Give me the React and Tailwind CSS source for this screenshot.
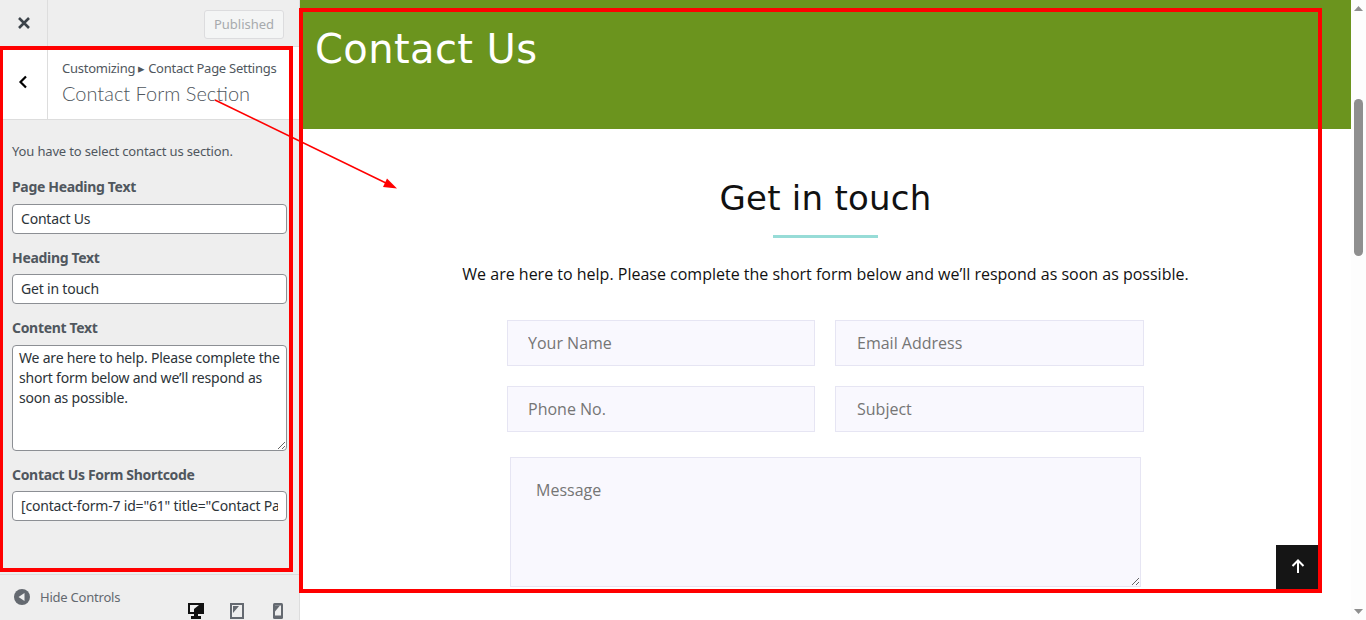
import React from "react";

const ubuntu = "font-['Noto_Sans','Open_Sans',sans-serif]";

function SideField({ label, value, mt, gap }) {
  return (
    <div className={mt}>
      <div className="text-[14px] leading-[20px] font-bold text-[#50575e] tracking-[-0.32px]">{label}</div>
      <input
        readOnly
        value={value}
        className={`${gap} block w-[275px] h-[30px] px-[8px] pb-[2px] bg-white border border-[#8c8f94] rounded-[4px] text-[14px] text-[#2c3338] outline-none tracking-[-0.2px]`}
      />
    </div>
  );
}

function FormInput({ placeholder, pad }) {
  return (
    <input
      placeholder={placeholder}
      className={`${pad} block w-full h-[46px] pr-[20px] bg-[#f9f8fe] border border-[#e6e5f3] text-[16px] text-[#333] placeholder:text-[#757575] outline-none`}
    />
  );
}

export default function App() {
  return (
    <div className="relative flex w-[1366px] h-[620px] overflow-hidden bg-white">
      {/* customizer sidebar */}
      <aside className={`flex flex-col w-[300px] h-full shrink-0 bg-[#eeeeee] border-r border-[#dddddd] ${ubuntu}`}>
        <div className="flex items-start justify-between h-[47px] shrink-0 border-b border-[#dddddd] pr-[15px]">
          <div className="flex items-center justify-center w-[48px] h-full border-r border-[#dddddd]">
            <svg width="14" height="14" viewBox="0 0 14 14" fill="none" stroke="#3c434a" strokeWidth="2.6">
              <path d="M2 2l10 10M12 2L2 12" />
            </svg>
          </div>
          <div className="mt-[10px] flex items-center justify-center w-[80px] h-[29px] bg-[#f4f5f5] border border-[#dcdcde] rounded-[3px] text-[13px] text-[#a7aaad]">
            Published
          </div>
        </div>

        <div className="flex h-[73px] shrink-0 bg-white border-b border-[#dddddd]">
          <div className="flex items-center justify-center w-[48px] h-full pr-[1px] pb-[2px] border-r border-[#dddddd]">
            <svg width="10" height="14" viewBox="0 0 10 14" fill="none" stroke="#000" strokeWidth="2.2">
              <path d="M8 1.500L2.500 7 8 12.500" />
            </svg>
          </div>
          <div className="pl-[14px] pt-[12px]">
            <div className="text-[13px] leading-[18px] text-[#50575e] whitespace-nowrap tracking-[-0.26px]">
              Customizing ▸ Contact Page Settings
            </div>
            <div className="mt-[2px] font-['Lato',sans-serif] text-[20px] leading-[28px] font-light text-[#50575e] whitespace-nowrap">
              Contact Form Section
            </div>
          </div>
        </div>

        <div className="flex-1 pl-[12px] pt-[21px]">
          <div className="text-[13px] leading-[20px] text-[#50575e] tracking-[-0.15px]">You have to select contact us section.</div>
          <SideField label="Page Heading Text" value="Contact Us" mt="mt-[16px]" gap="mt-[7px]" />
          <SideField label="Heading Text" value="Get in touch" mt="mt-[14px]" gap="mt-[6px]" />
          <div className="mt-[14px]">
            <div className="text-[14px] leading-[20px] font-bold text-[#50575e] tracking-[-0.32px]">Content Text</div>
            <textarea
              readOnly
              value="We are here to help. Please complete the short form below and we’ll respond as soon as possible."
              className="mt-[7px] block w-[275px] h-[106px] px-[6px] py-[2px] bg-white border border-[#8c8f94] rounded-[4px] text-[14px] leading-[20px] text-[#2c3338] outline-none tracking-[-0.2px]"
            />
          </div>
          <SideField label="Contact Us Form Shortcode" value={'[contact-form-7 id="61" title="Contact Page Form"]'} mt="mt-[14px]" gap="mt-[6px]" />
        </div>

        <div className="flex items-start justify-between h-[46px] shrink-0 border-t border-[#dddddd] pl-[14px] pr-[16px]">
          <div className="flex items-center gap-[10px] mt-[14px]">
            <svg width="16" height="16" viewBox="0 0 16 16">
              <circle cx="8" cy="8" r="8" fill="#646970" />
              <path d="M10.500 4v8L4.500 8z" fill="#eee" />
            </svg>
            <span className="text-[13px] leading-[16px] text-[#646970] tracking-[-0.22px]">Hide Controls</span>
          </div>
          <div className="flex items-center mt-[28px]">
            <svg width="16" height="16" viewBox="0 0 16 16">
              <path d="M0 0h16v11h-6v2h3v3H3v-3h3v-2H0z" fill="#111" />
              <path d="M2 2h9L6 6v3H2z" fill="#eee" />
            </svg>
            <svg className="ml-[26px]" width="14" height="16" viewBox="0 0 14 16">
              <rect x="1" y="1" width="12" height="14" fill="none" stroke="#646970" strokeWidth="2" />
              <path d="M3 3h6l-6 7z" fill="#646970" />
            </svg>
            <svg className="ml-[29px]" width="10" height="16" viewBox="0 0 10 16">
              <rect x="0" y="0" width="10" height="16" rx="1.500" fill="#646970" />
              <path d="M2 2.500h6v10H2z" fill="#eee" />
              <path d="M2 2.500h5l-5 6z" fill="#646970" />
            </svg>
          </div>
        </div>
      </aside>

      {/* preview */}
      <main className="relative flex-1 min-w-0 font-['Open_Sans',sans-serif]">
        <div className="h-[129px] bg-[#6b941e] pl-[15px] pt-[22px]">
          <h1 className="font-['DejaVu_Sans',sans-serif] text-[40px] leading-[54px] text-white tracking-[0.4px]">Contact Us</h1>
        </div>
        <section className="flex flex-col items-center pt-[46px]">
          <h2 className="font-['DejaVu_Sans',sans-serif] text-[34px] leading-[46px] font-normal text-[#111] tracking-[0.25px]">Get in touch</h2>
          <div className="mt-[14px] w-[105px] h-[3px] bg-[#97dcd7]" />
          <p className="mt-[24px] text-[16px] leading-[24px] text-[#111]">
            We are here to help. Please complete the short form below and we’ll respond as soon as possible.
          </p>
          <div className="mt-[34px] grid grid-cols-[308px_309px] gap-x-[20px] gap-y-[20px]">
            <FormInput placeholder="Your Name" pad="pl-[20px]" />
            <FormInput placeholder="Email Address" pad="pl-[21px]" />
            <FormInput placeholder="Phone No." pad="pl-[20px]" />
            <FormInput placeholder="Subject" pad="pl-[21px]" />
          </div>
          <textarea
            placeholder="Message"
            className="mt-[25px] block w-[631px] h-[130px] px-[25px] pt-[20px] bg-[#f9f8fe] border border-[#e6e5f3] text-[16px] placeholder:text-[#757575] outline-none"
          />
        </section>

        <div className="absolute left-[976px] top-[545px] flex items-center justify-center w-[42px] h-[45px] pl-[2px] pb-[2px] bg-[#151515]">
          <svg width="14" height="15" viewBox="0 0 14 15" fill="none" stroke="#fff" strokeWidth="2">
            <path d="M7 14V2M1.500 7L7 1.500 12.500 7" />
          </svg>
        </div>
      </main>

      {/* scrollbar */}
      <div className="flex flex-col items-center justify-between w-[15px] shrink-0 bg-[#fdfdfd] pt-[6px] pb-[6px]">
        <div className="flex flex-col items-center">
          <svg width="9" height="5" viewBox="0 0 9 5"><path d="M4.500 0L9 5H0z" fill="#8f8f8f" /></svg>
          <div className="mt-[88px] w-[9px] h-[157px] rounded-full bg-[#8f8f8f]" />
        </div>
        <svg width="9" height="5" viewBox="0 0 9 5"><path d="M0 0h9L4.500 5z" fill="#8f8f8f" /></svg>
      </div>

      {/* annotations */}
      <div className="absolute left-[-1px] top-[46px] w-[294px] h-[526px] border-[4px] border-[#ff0000] pointer-events-none" />
      <div className="absolute left-[299px] top-[8px] w-[1023px] h-[585px] border-[4px] border-[#ff0000] pointer-events-none" />
      <svg className="absolute left-0 top-0 pointer-events-none" width="420" height="200" viewBox="0 0 420 200">
        <path d="M215 100L389 184.500" stroke="#ff0000" strokeWidth="1.500" />
        <path d="M397 188.500L383 187 387 178.500z" fill="#ff0000" />
      </svg>
    </div>
  );
}
